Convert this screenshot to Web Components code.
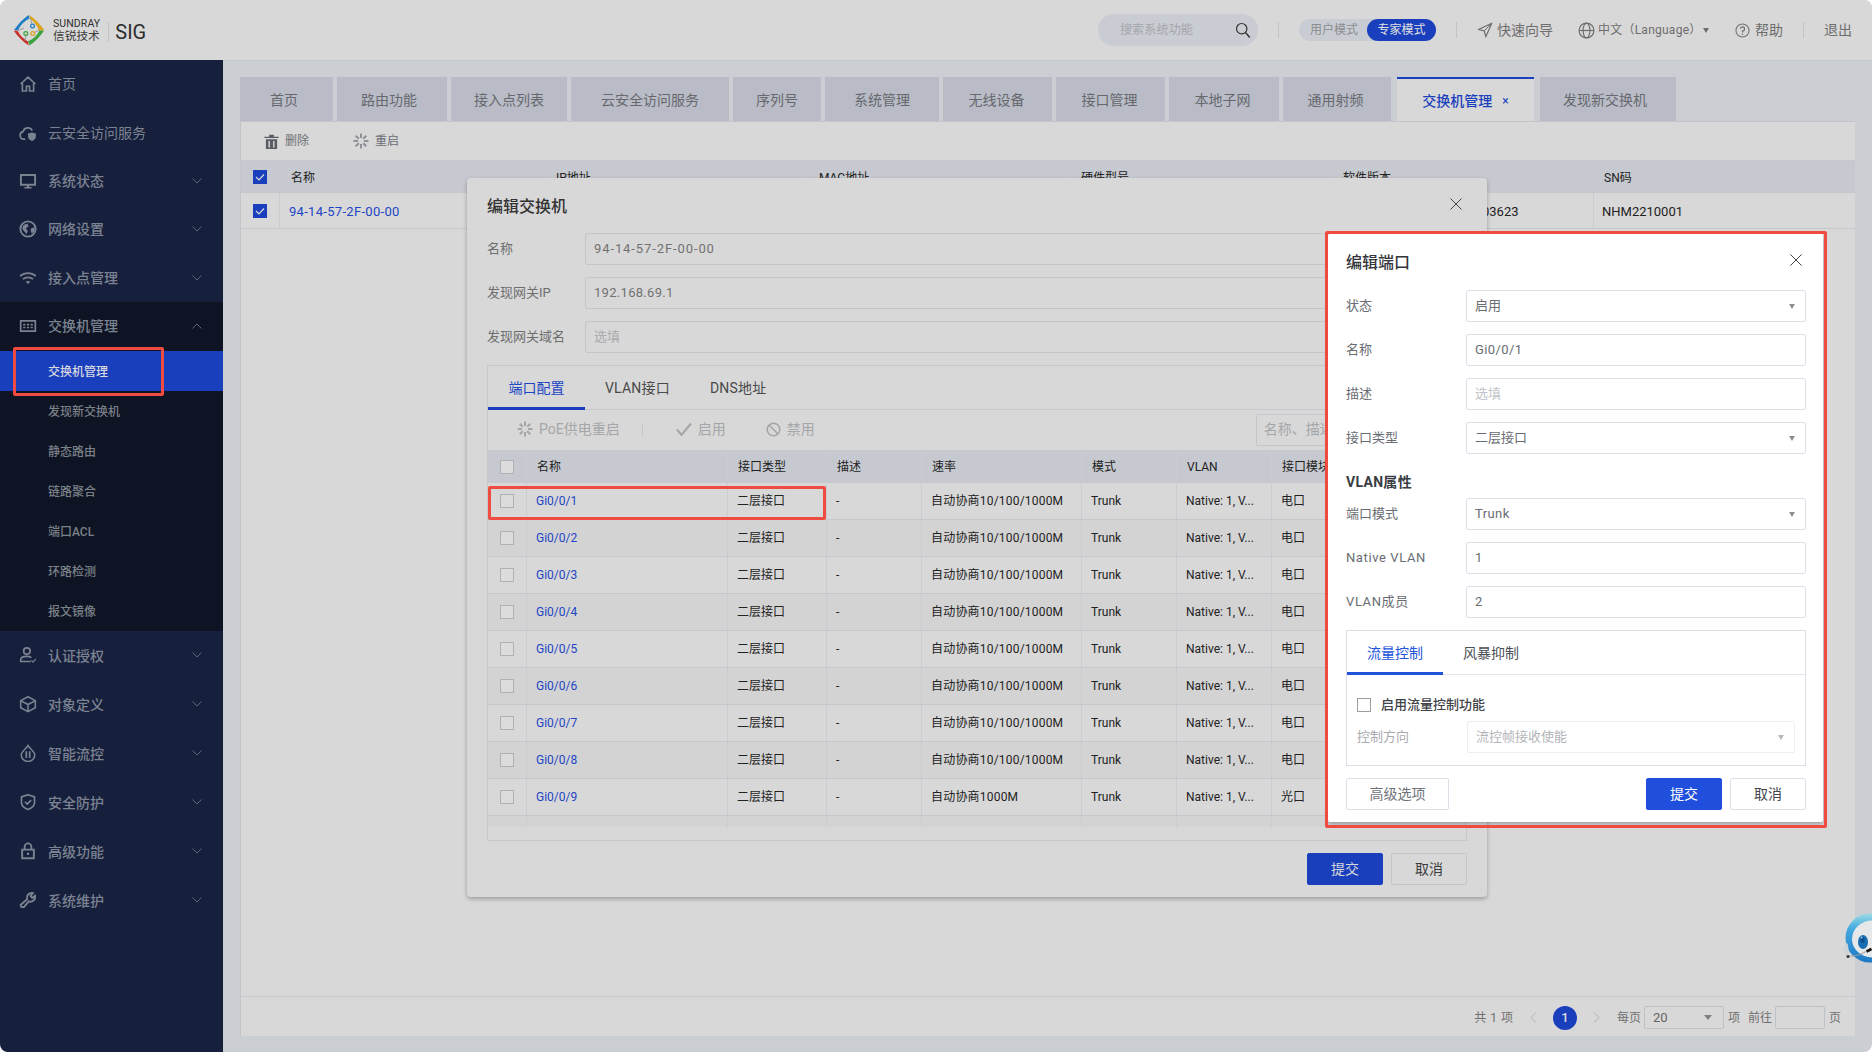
<!DOCTYPE html>
<html lang="zh-CN">
<head>
<meta charset="utf-8">
<title>SIG</title>
<style>
html,body{margin:0;padding:0;width:1872px;height:1052px;overflow:hidden;background:#fff;font-family:Roboto,"Noto Sans CJK SC",sans-serif}
</style>
</head>
<body>
<x-app></x-app>
<script>
const ICONS={
home:`<path d="M1.500 8 8 2l6.500 6M3 7v7.200h3.600V10h2.800v4.200H13V7" fill="none" stroke="currentColor" stroke-width="1.500"/>`,
cloud:`<path d="M5.500 13.500H4.400A3.400 3.400 0 0 1 3.600 6.800 4.400 4.400 0 0 1 11.800 5.800" fill="none" stroke="currentColor" stroke-width="1.500"/><path d="M11.500 7.500l3.500 1v2.700c0 2-1.600 3.200-3.500 3.800-1.900-.6-3.500-1.800-3.500-3.800V8.500z" fill="currentColor"/>`,
monitor:`<path d="M1.700 2.700h12.600v8.600H1.700z" fill="none" stroke="currentColor" stroke-width="1.700"/><path d="M7 11.500h2v2H7zM4.800 13.300h6.400v1.300H4.800z" fill="currentColor"/>`,
globe:`<circle cx="8" cy="8" r="6.800" fill="none" stroke="currentColor" stroke-width="1.700"/><path d="M4 4.500 7.500 3l1 2.500L6 7.500l1.800 2-1 3L4.500 10 2.800 7.500zM10.500 7.500l3-1 .5 3-2.500 3-1-2.500z" fill="currentColor"/>`,
wifi:`<path d="M1 6.300C5 2.700 11 2.700 15 6.300M3.500 9C6 7 10 7 12.500 9" fill="none" stroke="currentColor" stroke-width="1.500"/><path d="M6 11.200c1.200-.8 2.800-.8 4 0L8 13.500z" fill="currentColor"/>`,
switch:`<path d="M1.500 3.500h13v9h-13z" fill="none" stroke="currentColor" stroke-width="1.500"/><path d="M3.700 6h2v1.500h-2zM7 6h2v1.500H7zM10.300 6h2v1.500h-2zM3.700 8.600h2v1.500h-2zM7 8.600h2v1.500H7zM10.300 8.600h2v1.500h-2z" fill="currentColor"/>`,
user:`<circle cx="7" cy="4.500" r="2.900" fill="none" stroke="currentColor" stroke-width="1.500"/><path d="M10.500 13.800H1.500v-1.300c0-2 2.500-3.200 5.500-3.200 1.500 0 3 .3 4 1" fill="none" stroke="currentColor" stroke-width="1.500"/><path d="m11 12.800 1.500 1.500 2.500-2.800" fill="none" stroke="currentColor" stroke-width="1"/>`,
cube:`<path d="M8 1.500 14.500 5v6.300L8 14.800 1.500 11.300V5zM1.800 5.200 8 8.500l6.200-3.300M8 8.500v6" fill="none" stroke="currentColor" stroke-width="1.400"/>`,
flow:`<path d="M8 1.500c1 2 5.500 4.500 6 8a5.500 5.500 0 0 1-12 0c.5-3.500 5-6 6-8z" fill="none" stroke="currentColor" stroke-width="1.400"/><path d="M6.500 6.500v6M9.500 6.500v6" stroke="currentColor" stroke-width="1.500"/>`,
shield:`<path d="M8 1.500l5.800 2v5c0 3-2.500 5-5.800 6.200-3.300-1.200-5.800-3.200-5.800-6.200v-5z" fill="none" stroke="currentColor" stroke-width="1.500"/><path d="m5.300 7.800 2 2 3.500-3.500" fill="none" stroke="currentColor" stroke-width="1.400"/>`,
lock:`<path d="M2.800 6.800h10.400v7.700H2.800z" fill="none" stroke="currentColor" stroke-width="1.700"/><path d="M5 6.500V4.300a3 3 0 0 1 6 0v2.200" fill="none" stroke="currentColor" stroke-width="1.600"/><path d="M7 9.500h2v2H7z" fill="currentColor"/>`,
wrench:`<path d="M2.200 14.300 1.500 12.300l5.800-5A4.200 4.200 0 0 1 12.200 1.800L10.200 4.300l1.500 1.900L14.200 4.200a4.200 4.200 0 0 1-5.500 5L4.300 14.300z" fill="none" stroke="currentColor" stroke-width="1.700"/>`,
search:`<circle cx="6.700" cy="6.700" r="5.200" fill="none" stroke="currentColor" stroke-width="1.200"/><path d="m10.500 10.500 4.300 5" stroke="currentColor" stroke-width="1.400" fill="none"/>`,
nav:`<path d="M14.800 1.200 1.500 7.500l5.800 1.300 1.500 6z" fill="none" stroke="currentColor" stroke-width="1.200" stroke-linejoin="round"/><path d="m7.300 8.800 7.500-7.600" stroke="currentColor" stroke-width="1"/>`,
world:`<circle cx="8" cy="8" r="7" fill="none" stroke="currentColor" stroke-width="1.100"/><ellipse cx="8" cy="8" rx="3.200" ry="7" fill="none" stroke="currentColor" stroke-width="1.100"/><path d="M1 8h14" stroke="currentColor" stroke-width="1.100"/>`,
help:`<circle cx="8" cy="8" r="7" fill="none" stroke="currentColor" stroke-width="1.100"/><path d="M5.800 6.200A2.200 2.200 0 1 1 8 8.500v1.500" fill="none" stroke="currentColor" stroke-width="1.200"/><path d="M7.300 11.200h1.400v1.400H7.300z" fill="currentColor"/>`,
trash:`<path d="M.5 3h15v1.300H.5zM5.500.7h5v2.500h-5z" fill="currentColor"/><path fill-rule="evenodd" d="M2 5.500h12V16H2zM4.800 7.500v6.800h1.500V7.500zM9.700 7.500v6.800h1.500V7.500z" fill="currentColor"/>`,
spin:`<path d="M8 .5v4.500M8 11v4.500M.5 8H5M11 8h4.500M2.700 2.700 5.800 5.800M10.200 10.200l3.100 3.100M13.300 2.700l-3.100 3.100M5.800 10.200l-3.100 3.100" stroke="currentColor" stroke-width="2" fill="none"/>`,
check:`<path d="m1 8.500 4.500 5.500L15 2.500" fill="none" stroke="currentColor" stroke-width="2"/>`,
ban:`<circle cx="8" cy="8" r="6.700" fill="none" stroke="currentColor" stroke-width="1.700"/><path d="m3.500 3.500 9 9" stroke="currentColor" stroke-width="1.700"/>`,
};
const ic=(n,s=16,st='')=>`<svg width="${s}" height="${s}" viewBox="0 0 16 16" style="display:block;flex:none;${st}" aria-hidden="true">${ICONS[n]}</svg>`;
const chev=(up)=>`<svg width="10" height="6" viewBox="0 0 10 6" style="display:block;flex:none"><path d="${up?'M.5 5.500 5 1l4.500 4.500':'M.5.500 5 5 9.500.500'}" fill="none" stroke="#5d6678" stroke-width="1"/></svg>`;
const FF=`Roboto,"Noto Sans CJK SC",sans-serif`;

class Base extends HTMLElement{
  connectedCallback(){
    if(this.shadowRoot) return;
    const r=this.attachShadow({mode:'open'});
    r.innerHTML=`<style>${this.css()}</style>${this.html()}`;
  }
  attr(n,d=''){return this.hasAttribute(n)?this.getAttribute(n):d}
}

class XLogo extends Base{
  css(){return `:host{display:flex;align-items:center;height:100%;margin-left:13px}
  .w{display:flex;flex-direction:column;margin-left:8px;color:#2f2f2f;line-height:1}
  .a{font-size:10.500px;letter-spacing:.1px;height:11px;margin-top:1px}
  .b{font-size:11.700px;margin-top:1px;color:#3a3a3a}
  .d{width:1px;height:20px;background:#c3c3c3;margin:3px 6px 0 8px}
  .s{font-size:20px;color:#2c2c2c;margin-top:4px}`}
  html(){return `<svg width="32" height="32" viewBox="0 0 32 32" style="display:block;flex:none">
  <path d="M.7 16.500C5 10 10 5 15.500 1l1.300 3.300C11.500 7 7.500 11 5 16.500c-1.500-.6-3-.6-4.300 0z" fill="#1f7fc4"/>
  <path d="M16.500 1C22 5 27 10 31.300 16c-1.800-.2-3.800.3-4.800 1.500C24.500 12 21 8 16.800 4.300z" fill="#dba41f"/>
  <path d="M31 16.800c-4 6-9 11-14.500 14.700-.2-1.800-.8-3-1.500-4.200 5-1.800 9-5.500 11.300-10.200 1.500-.6 3-.8 4.700-.3z" fill="#3aa33d"/>
  <path d="M15.800 31.500C10 27.500 5 23 1 17c1.500-.6 3-.6 4 .3 2 4.700 6 8 10 10.200z" fill="#c9302c"/>
  <path d="M19 10.500l-1.500-6M13 21l-1 6M21.500 18.500l5-2.500M4 17l7-3" stroke="#8c8c8c" stroke-width=".8" fill="none"/>
  <path d="M19 10.500V8M13 21v3M21.500 18.500l3-1.200M5 16.500l5 1" stroke="#3a7fa8" stroke-width="0"/>
  <circle cx="19.500" cy="12" r="1.900" fill="none" stroke="#1f7fc4" stroke-width="1.200"/>
  <circle cx="12.800" cy="19.500" r="1.900" fill="none" stroke="#3aa33d" stroke-width="1.200"/>
  <circle cx="19.800" cy="19.500" r="1.900" fill="none" stroke="#dba41f" stroke-width="1.200"/></svg>
  <div class="w"><div class="a">SUNDRAY</div><div class="b">信锐技术</div></div><div class="d"></div><div class="s">SIG</div>`}
}
class XHeader extends Base{
  css(){return `:host{display:flex;align-items:center;box-sizing:border-box;height:60px;background:#d8d8d8;color:#6e6e6e;font-size:14px;padding-right:20px}
  .left{height:60px;margin-right:auto;display:flex}
  .search{box-sizing:border-box;width:160px;height:32px;border-radius:16px;background:#c9ccd2;display:flex;align-items:center;justify-content:space-between;padding:0 7px 0 22px;font-size:12.200px;color:#a4a6ab}
  .search svg{color:#333}
  .sep{width:1px;height:16px;background:#c2c4c9;margin:0 20px}
  .pill{display:flex;align-items:center;width:137px;height:22px;border-radius:11px;background:#c9ccd2;font-size:12px;color:#8b8c90}
  .pill span{flex:1;text-align:center;padding-left:2px}
  .pill b{font-weight:400;width:69px;height:22px;line-height:22px;border-radius:11px;background:#1a3fbd;color:#e0e0e0;text-align:center}
  .it{display:flex;align-items:center;white-space:nowrap;color:#6e6e6e}
  .caret{width:0;height:0;border:3.500px solid transparent;border-top:5px solid #6e6e6e;border-bottom:0;margin-left:1.500px}
  .lang{font-size:12px;margin-left:25px;letter-spacing:.25px}`}
  html(){return `<div class="left"><x-logo></x-logo></div>
  <div class="search"><span>搜索系统功能</span>${ic('search',16)}</div><div class="sep"></div>
  <div class="pill"><span>用户模式</span><b>专家模式</b></div><div class="sep"></div>
  <div class="it">${ic('nav',16,'margin-right:4px')}快速向导</div>
  <div class="it lang">${ic('world',17,'margin-right:3px')}中文（Language）<i class="caret"></i></div>
  <div class="it" style="margin-left:26px">${ic('help',15,'margin-right:5px')}帮助</div><div class="sep"></div><div class="it">退出</div>`}
}
class XNavItem extends Base{
  css(){const h=this.attr('h','48.400');return `:host{display:flex;align-items:center;box-sizing:border-box;height:${h}px;padding:0 21px 0 19px;color:#7b8392;font-size:14px;font-weight:${this.attr('w','500')}}
  span{margin-left:11px;flex:1;white-space:nowrap;padding-top:${this.attr('pt','0')}px}`}
  html(){const c=this.attr('chev');return `${ic(this.attr('icon'),18)}<span><slot></slot></span>${c?chev(c==='up'):''}`}
}
class XSubItem extends Base{
  css(){const a=this.hasAttribute('active');return `:host{display:flex;align-items:center;box-sizing:border-box;height:40px;padding:2px 0 0 48px;font-size:12px;font-weight:500;color:${a?'#d8dae0':'#7b8088'};background:${a?'#1a3fbd':'transparent'}}`}
  html(){return `<slot></slot>`}
}
class XSidebar extends Base{
  css(){return `:host{display:block;background:#161f3b;width:223px;flex:none}
  .g{background:#0e1423}`}
  html(){return `<x-nav-item icon="home" w="400">首页</x-nav-item>
  <x-nav-item icon="cloud" w="400">云安全访问服务</x-nav-item>
  <x-nav-item icon="monitor" chev="down">系统状态</x-nav-item>
  <x-nav-item icon="globe" chev="down">网络设置</x-nav-item>
  <x-nav-item icon="wifi" chev="down">接入点管理</x-nav-item>
  <div class="g"><x-nav-item icon="switch" chev="up" h="49">交换机管理</x-nav-item>
  <div><x-sub-item active>交换机管理</x-sub-item><x-sub-item>发现新交换机</x-sub-item><x-sub-item>静态路由</x-sub-item><x-sub-item>链路聚合</x-sub-item><x-sub-item>端口ACL</x-sub-item><x-sub-item>环路检测</x-sub-item><x-sub-item>报文镜像</x-sub-item></div></div>
  <x-nav-item icon="user" chev="down" h="49" pt="2">认证授权</x-nav-item>
  <x-nav-item icon="cube" chev="down" h="49" pt="2">对象定义</x-nav-item>
  <x-nav-item icon="flow" chev="down" h="49" pt="2">智能流控</x-nav-item>
  <x-nav-item icon="shield" chev="down" h="49" pt="2">安全防护</x-nav-item>
  <x-nav-item icon="lock" chev="down" h="49" pt="2">高级功能</x-nav-item>
  <x-nav-item icon="wrench" chev="down" h="49" pt="2">系统维护</x-nav-item>`}
}
class XPageTab extends Base{
  css(){const a=this.hasAttribute('active');return `:host{display:flex;align-items:center;justify-content:center;box-sizing:border-box;flex:none;width:${this.attr('w')}px;height:44px;font-size:14px;white-space:nowrap;margin-left:${this.attr('ml','0')}px;padding-right:${this.attr('off','0')}px;padding-top:1px;
   background:${a?'#d8d8d8':'#b9bcc6'};color:${a?'#1a3fbd':'#66686e'};font-weight:${a?500:400};${a?'border-top:2px solid #1a3fbd;':''}}
   i{font-style:normal;font-weight:400;font-size:12px;margin-left:10px;line-height:1}`}
  html(){return `<slot></slot>${this.hasAttribute('active')?'<i>×</i>':''}`}
}
class XCheck extends Base{
  css(){const c=this.hasAttribute('checked');const v=this.attr('v','dim');return `:host{display:block;box-sizing:border-box;width:14px;height:14px;flex:none;${c?'background:#1a3fbd;':v==='live'?'border:1px solid #9a9da3;background:#fff;':'border:1px solid #b0b1b5;background:#dcdcdc;'}}
  svg{display:block}`}
  html(){return this.hasAttribute('checked')?`<svg width="14" height="14" viewBox="0 0 14 14"><path d="m3 7 3 3 5-5.500" fill="none" stroke="#d8d8d8" stroke-width="1.200"/></svg>`:''}
}
class XMainTable extends Base{
  css(){return `:host{display:block;font-size:12px;color:#222}
  .r{display:grid;grid-template-columns:39px 265px 263px 262px 262px 262px 1fr;border-bottom:1px solid #c5c7cd;box-sizing:border-box}
  .h{height:33px;background:#c6c9cf;border-top:1px solid #c5c7cd}.d{height:36px;font-size:13px}
  .c{display:flex;align-items:center;box-sizing:border-box;border-right:1px solid #c9cbd0;padding:2px 0 0 11px;white-space:nowrap;overflow:hidden}
  .c.k{padding:0 0 0 12px;justify-content:flex-start}.c:last-child{border-right:0}
  a{color:#1c45c5;letter-spacing:.3px}`}
  html(){return `<div class="r h"><div class="c k"><x-check checked></x-check></div><div class="c">名称</div><div class="c">IP地址</div><div class="c">MAC地址</div><div class="c">硬件型号</div><div class="c">软件版本</div><div class="c" style="padding-left:10px">SN码</div></div>
  <div class="r d"><div class="c k"><x-check checked></x-check></div><div class="c" style="padding-left:9px"><a>94-14-57-2F-00-00</a></div><div class="c"></div><div class="c"></div><div class="c"></div><div class="c" style="padding-left:150px">03623</div><div class="c" style="padding-left:8px">NHM2210001</div></div>`}
}
class XPager extends Base{
  css(){return `:host{display:flex;align-items:center;justify-content:flex-end;box-sizing:border-box;height:40px;border-top:1px solid #c6c8ce;padding:2px 14px 0 0;font-size:12px;color:#6f6f6f;white-space:nowrap;margin-top:auto}
  .cur{width:24px;height:24px;border-radius:50%;background:#1a3fbd;color:#dcdcdc;display:flex;align-items:center;justify-content:center;font-size:13px;font-weight:500;margin:0 16px}
  .sel,.inp{box-sizing:border-box;height:23px;border:1px solid #bfc1c7;border-radius:2px}
  .sel{width:80px;margin:0 4px 0 3px;display:flex;align-items:center;justify-content:space-between;padding:0 11px 0 8px;font-size:13px;color:#666}
  .sel i{border:4px solid transparent;border-top:5px solid #7f8187;border-bottom:0}
  .inp{width:50px;margin:0 4px 0 3px}
  svg{display:block;flex:none}`}
  html(){const ch=(d)=>`<svg width="7" height="11" viewBox="0 0 7 11"><path d="${d}" fill="none" stroke="#b2b3b6" stroke-width="1"/></svg>`;
  return `<span style="word-spacing:1px">共 1 项</span><span style="width:17px"></span>${ch('M6 .5 1 5.500 6 10.500')}<div class="cur">1</div>${ch('M1 .5 6 5.500 1 10.500')}<span style="margin-left:17px">每页</span><div class="sel">20<i></i></div><span>项</span><span style="margin-left:8px">前往</span><div class="inp"></div><span>页</span>`}
}
class XField extends Base{
  css(){const d=this.hasAttribute('dis');const v=this.attr('v','dim')==='live';
  return `:host{display:flex;align-items:center;height:32px;margin-bottom:${this.attr('mb','12')}px;font-size:13px;white-space:nowrap}
  label{flex:none;width:${this.attr('lw','98')}px;color:${d?'#a9abb0':v?'#696c72':'#6e6e6e'};letter-spacing:${this.attr('lls','0')}px}
  .i{flex:1;box-sizing:border-box;height:32px;border:1px solid ${d?'#eceef2':v?'#dcdfe8':'#c4c6cc'};border-radius:2px;padding:0 8px;display:flex;align-items:center;justify-content:space-between;color:${d?'#b3b5ba':v?'#696c72':'#727272'}}
  .i span{letter-spacing:${this.attr('ls','0')}px}
  .p{color:${v?'#bfc2c8':'#a9aaae'}}
  .c{border:3.700px solid transparent;border-top:5px solid ${d?'#b5b7bd':'#8a8d95'};border-bottom:0;margin-right:2px}`}
  html(){const ph=this.attr('ph');return `<label>${this.attr('label')}</label><div class="i"><span class="${ph?'p':''}">${ph||this.attr('value')}</span>${this.hasAttribute('select')?'<i class="c"></i>':''}</div>`}
}
class XBtn extends Base{
  css(){const k=this.attr('kind','def');const map={
    primary:'background:#1f4fdc;color:#fff;border:1px solid #1f4fdc;',
    primarydim:'background:#1a3fbd;color:#d8d8d8;border:1px solid #1a3fbd;',
    def:'background:#fff;color:#43464c;border:1px solid #dcdfe8;',
    muted:'background:#fff;color:#6e7177;border:1px solid #dcdfe8;',
    dim:'background:#d8d8d8;color:#3c3c3c;border:1px solid #c4c6cc;'};
  return `:host{display:flex;align-items:center;justify-content:center;box-sizing:border-box;height:32px;width:${this.attr('w','76')}px;border-radius:2px;font-size:14px;flex:none;${map[k]}}`}
  html(){return `<slot></slot>`}
}
class XTabBar extends Base{
  css(){const v=this.attr('v','dim')==='live';const h=this.attr('h','44');const aw=this.attr('aw','97');
  return `:host{display:flex;box-sizing:border-box;height:${h}px;border-bottom:1px solid ${v?'#e3e5ea':'#c6c8ce'};font-size:14px;color:${v?'#4b4e54':'#4a4a4a'}}
  .t{display:flex;align-items:center;height:${h}px;box-sizing:border-box;white-space:nowrap;letter-spacing:${v?0:.2}px}
  .a{width:${aw}px;justify-content:center;color:${v?'#2052dc':'#1c45c5'};border-bottom:3px solid ${v?'#2052dc':'#1a3fbd'};padding-top:2px;letter-spacing:0}
  .n{padding:0 20px 1px}`}
  html(){const t=this.attr('tabs').split(',');return t.map((s,i)=>`<div class="t ${i?'n':'a'}">${s}</div>`).join('')}
}
class XPortTable extends Base{
  css(){return `:host{display:block;height:377px;overflow:hidden;font-size:12px;color:#222}
  .r{display:grid;grid-template-columns:39px 201px 99px 95px 160px 95px 95px 1fr;box-sizing:border-box;border-bottom:1px solid #c5c7cd}
  .h{height:33px;background:#c6c9cf;border-top:1px solid #c5c7cd}.d{height:37px}.e{background:#d3d3d3}
  .c{display:flex;align-items:center;box-sizing:border-box;border-right:1px solid #cbccd1;padding-left:9px;white-space:nowrap;overflow:hidden}
  .h .c{padding-left:10px}.c.k,.h .c.k{padding-left:12px}
  a{color:#1c45c5}.s{letter-spacing:.2px}`}
  html(){
    const head=['名称','接口类型','描述','速率','模式','VLAN','接口模块'];
    let o=`<div class="r h"><div class="c k"><x-check></x-check></div>${head.map(s=>`<div class="c">${s}</div>`).join('')}</div>`;
    for(let i=1;i<=10;i++){
      const last=i==10;
      const sp=i==9?'自动协商1000M':'自动协商10/100/1000M';
      const cells=last?['','','','','','','']:[`<a>Gi0/0/${i}</a>`,'二层接口','-',`<span class="s">${sp}</span>`,'Trunk','Native: 1, V...',i==9?'光口':'电口'];
      o+=`<div class="r d ${i%2?'':'e'}"><div class="c k">${last?'':'<x-check></x-check>'}</div>${cells.map(s=>`<div class="c">${s}</div>`).join('')}</div>`;
    }
    return o;
  }
}
class XPortTools extends Base{
  css(){return `:host{display:flex;align-items:center;box-sizing:border-box;height:40px;padding-left:29px;font-size:14px;color:#a5a6a9;white-space:nowrap}
  .b{display:flex;align-items:center;padding-bottom:2px}svg{color:#a5a6a9;margin-right:6px}
  .sep{width:1px;height:14px;background:#c4c6cb;margin:0 33px 0 22px}
  .q{margin-left:441px;box-sizing:border-box;width:210px;height:32px;border:1px solid #c4c6cc;border-radius:2px;padding:0 7px 2px;display:flex;align-items:center;flex:none}`}
  html(){return `<div class="b">${ic('spin',16)}PoE供电重启</div><div class="sep"></div><div class="b">${ic('check',16)}启用</div><div class="b" style="margin-left:40px">${ic('ban',15)}禁用</div><div class="q">名称、描述</div>`}
}
class XModal extends Base{
  css(){const v=this.attr('v','dim')==='live';
  return `:host{position:absolute;left:${this.attr('x')}px;top:${this.attr('y')}px;width:${this.attr('w')}px;height:${this.attr('h')}px;box-sizing:border-box;border-radius:${v?2:4}px;background:${v?'#fff':'#d8d8d8'};box-shadow:0 2px 4px rgba(0,0,0,.28);padding:0 ${this.attr('pr','20')}px 0 ${this.attr('pl','20')}px;display:block}
  .t{display:flex;align-items:center;justify-content:space-between;box-sizing:border-box;height:${this.attr('th','55')}px;font-size:16px;font-weight:500;color:${v?'#33363c':'#333'};padding-top:2px}
  svg{display:block;margin-right:${this.attr('xr','5')}px;margin-top:-6px}`}
  html(){return `<div class="t"><span>${this.attr('title')}</span><svg width="12" height="12" viewBox="0 0 12 12"><path d="m.5.5 11 11M11.500.5l-11 11" stroke="#444" stroke-width="1" fill="none"/></svg></div><slot></slot>`}
}
class XFoot extends Base{
  css(){return `:host{display:flex;justify-content:flex-end;gap:8px;margin-top:12px}`}
  html(){return `<slot></slot>`}
}
class XBox extends Base{
  css(){const v=this.attr('v','dim')==='live';return `:host{display:block;box-sizing:border-box;height:${this.attr('h')}px;border:1px solid ${v?'#dcdfe8':'#c6c8ce'}}`}
  html(){return `<slot></slot>`}
}
class XFlow extends Base{
  css(){return `:host{display:block;padding:20px 10px 0 10px}
  .k{display:flex;align-items:center;height:20px;font-size:13px;font-weight:500;color:#3f4248;gap:10px}`}
  html(){return `<div class="k"><x-check v="live"></x-check>启用流量控制功能</div><x-field style="margin-top:6px" mb="0" v="live" dis select lw="110" label="控制方向" value="流控帧接收使能"></x-field>`}
}
class XMark extends Base{
  css(){return `:host{position:absolute;left:${this.attr('x')}px;top:${this.attr('y')}px;width:${this.attr('w')}px;height:${this.attr('h')}px;box-sizing:border-box;border:3px solid #f04b41;border-radius:2px;pointer-events:none;display:block}`}
  html(){return ``}
}
class XMascot extends Base{
  css(){return `:host{position:absolute;left:1843px;top:913px;width:29px;height:52px;overflow:hidden;display:block}`}
  html(){return `<svg width="56" height="52" viewBox="0 0 56 52" style="display:block"><defs><linearGradient id="g" x1="0" y1="0" x2="0" y2="1"><stop offset="0" stop-color="#9ddbe6"/><stop offset=".3" stop-color="#45abe0"/><stop offset="1" stop-color="#1c78c4"/></linearGradient></defs>
  <circle cx="27" cy="25" r="24.500" fill="url(#g)"/><ellipse cx="29" cy="26" rx="20" ry="18.500" fill="#e6e8ea"/>
  <ellipse cx="20" cy="29" rx="5" ry="7" fill="#1a6cb0"/><ellipse cx="19.500" cy="27" rx="2" ry="3" fill="#0f4f8c"/><circle cx="18.500" cy="24.500" r="1" fill="#9cc6e8"/>
  <path d="M23.500 38.500l5-2.500" stroke="#111" stroke-width="2.600"/><path d="M5 43c4 .5 11-.5 18-4.500" stroke="#9a9ea3" stroke-width="1" fill="none"/>
  <ellipse cx="3.500" cy="37" rx="2" ry="7" fill="#cfd2d6"/><circle cx="5" cy="43.500" r="1.500" fill="#333"/></svg>`}
}
class XApp extends Base{
  css(){return `:host{display:block;position:relative;width:1872px;height:1052px;overflow:hidden;border-radius:8px;background:#cbced3;font-family:${FF};line-height:20px}
  .body{display:flex;height:992px}
  .main{flex:1;min-width:0;box-sizing:border-box;border-top:1px solid #c5c8ce;padding:16px 17px 16px 17px;display:flex;flex-direction:column}
  .tabs{display:flex;gap:4px;flex:none;height:44px;position:relative}
  .panel{flex:1;min-height:0;background:#d8d8d8;display:flex;flex-direction:column;border-left:1px solid #c3c5cb;border-top:1px solid #c3c5cb}
  .tb{display:flex;align-items:center;height:38px;flex:none;padding-left:23px;font-size:12px;color:#6b6e75}
  .tb span{display:flex;align-items:center}
  .head{font-size:14px;font-weight:700;color:#3a3d43;height:20px;line-height:20px;margin:18px 0 6px;letter-spacing:.3px}`}
  html(){
   const t=[['首页',93,5],['路由功能',110,6],['接入点列表',116,0],['云安全访问服务',158,0],['序列号',88,0],['系统管理',114,0],['无线设备',109,2],['接口管理',109,2],['本地子网',110,3],['通用射频',108,3]];
   return `<x-header></x-header>
   <div class="body"><x-sidebar></x-sidebar>
   <div class="main">
     <div class="tabs">${t.map(a=>`<x-page-tab w="${a[1]}" off="${a[2]}">${a[0]}</x-page-tab>`).join('')}<x-page-tab active w="137" ml="2">交换机管理</x-page-tab><x-page-tab w="136" ml="2" off="6">发现新交换机</x-page-tab></div>
     <div class="panel">
       <div class="tb"><span style="color:#5a5d64">${ic('trash',15,'margin-right:6px')}</span><span>删除</span><span style="margin-left:44px;color:#8e9199">${ic('spin',16,'margin-right:6px')}</span><span>重启</span></div>
       <x-main-table></x-main-table>
       <x-pager></x-pager>
     </div>
   </div></div>

   <x-modal x="467" y="178" w="1020" h="719" title="编辑交换机" xr="5">
     <x-field label="名称" value="94-14-57-2F-00-00" ls=".9"></x-field>
     <x-field label="发现网关IP" value="192.168.69.1" ls=".3"></x-field>
     <x-field label="发现网关域名" ph="选填"></x-field>
     <x-box h="476">
       <x-tab-bar tabs="端口配置,VLAN接口,DNS地址"></x-tab-bar>
       <x-port-tools></x-port-tools>
       <x-port-table></x-port-table>
     </x-box>
     <x-foot><x-btn kind="primarydim">提交</x-btn><x-btn kind="dim">取消</x-btn></x-foot>
   </x-modal>

   <x-modal v="live" x="1328" y="234" w="495" h="588" pl="18" pr="17" th="56" title="编辑端口" xr="4">
     <x-field v="live" lw="120" select label="状态" value="启用"></x-field>
     <x-field v="live" lw="120" label="名称" value="Gi0/0/1" ls=".4"></x-field>
     <x-field v="live" lw="120" label="描述" ph="选填"></x-field>
     <x-field v="live" lw="120" mb="0" select label="接口类型" value="二层接口"></x-field>
     <div class="head">VLAN属性</div>
     <x-field v="live" lw="120" select label="端口模式" value="Trunk" ls=".4"></x-field>
     <x-field v="live" lw="120" lls=".6" label="Native VLAN" value="1"></x-field>
     <x-field v="live" lw="120" lls=".6" label="VLAN成员" value="2"></x-field>
     <x-box v="live" h="136">
       <x-tab-bar v="live" h="44" aw="96" tabs="流量控制,风暴抑制"></x-tab-bar>
       <x-flow></x-flow>
     </x-box>
     <x-foot><x-btn kind="muted" w="103">高级选项</x-btn><span style="flex:1"></span><x-btn kind="primary">提交</x-btn><x-btn kind="def">取消</x-btn></x-foot>
   </x-modal>

   <x-mark x="13" y="347" w="151" h="49"></x-mark>
   <x-mark x="488" y="486" w="338" h="34"></x-mark>
   <x-mark x="1325" y="231" w="502" h="597"></x-mark>
   <x-mascot></x-mascot>`}
}
const defs={'x-logo':XLogo,'x-header':XHeader,'x-nav-item':XNavItem,'x-sub-item':XSubItem,'x-sidebar':XSidebar,'x-page-tab':XPageTab,'x-check':XCheck,'x-main-table':XMainTable,'x-pager':XPager,'x-field':XField,'x-btn':XBtn,'x-tab-bar':XTabBar,'x-port-table':XPortTable,'x-port-tools':XPortTools,'x-modal':XModal,'x-foot':XFoot,'x-box':XBox,'x-flow':XFlow,'x-mark':XMark,'x-mascot':XMascot,'x-app':XApp};
for(const k in defs) customElements.define(k,defs[k]);
</script>
</body>
</html>
